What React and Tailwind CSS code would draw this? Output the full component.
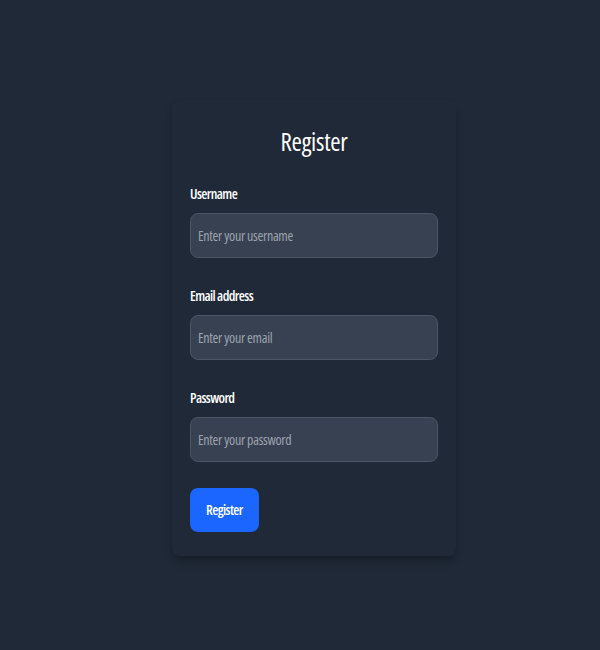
export default function App() {
  const fields = [
    { label: 'Username', type: 'text', placeholder: 'Enter your username' },
    { label: 'Email address', type: 'email', placeholder: 'Enter your email' },
    { label: 'Password', type: 'password', placeholder: 'Enter your password' },
  ];
  return (
    <div className="min-h-screen bg-[#1f2937] font-['Open_Sans',sans-serif] flex justify-center pt-[100px]">
      <div className="ml-[28px] w-[284px] h-[456px] rounded-lg bg-[#1f2937] shadow-[0_6px_10px_-2px_rgba(0,0,0,0.3)] px-[18px] pt-[26px] pb-[25px]">
        <h1 className="text-center text-white text-[25px] leading-[30px] font-normal font-stretch-condensed tracking-[-0.25px] mb-7">
          Register
        </h1>
        <form className="flex flex-col" onSubmit={(e) => e.preventDefault()}>
          {fields.map((f) => (
            <div key={f.label} className="mb-7 flex flex-col">
              <label className="text-white text-sm leading-5 font-semibold font-stretch-condensed tracking-[-0.6px] mb-[9px]">
                {f.label}
              </label>
              <input
                type={f.type}
                placeholder={f.placeholder}
                className="h-[45px] w-full rounded-lg border border-[#4b5563] bg-[#374151] px-[7px] text-sm tracking-[-0.3px] font-stretch-condensed text-white placeholder:text-[#9ca3af] outline-none"
              />
            </div>
          ))}
          <div className="-mt-[2px]">
            <button
              type="submit"
              className="h-[44px] px-4 rounded-lg bg-[#1a66ff] text-white text-sm font-semibold font-stretch-condensed tracking-[-0.6px]"
            >
              Register
            </button>
          </div>
        </form>
      </div>
    </div>
  );
}
